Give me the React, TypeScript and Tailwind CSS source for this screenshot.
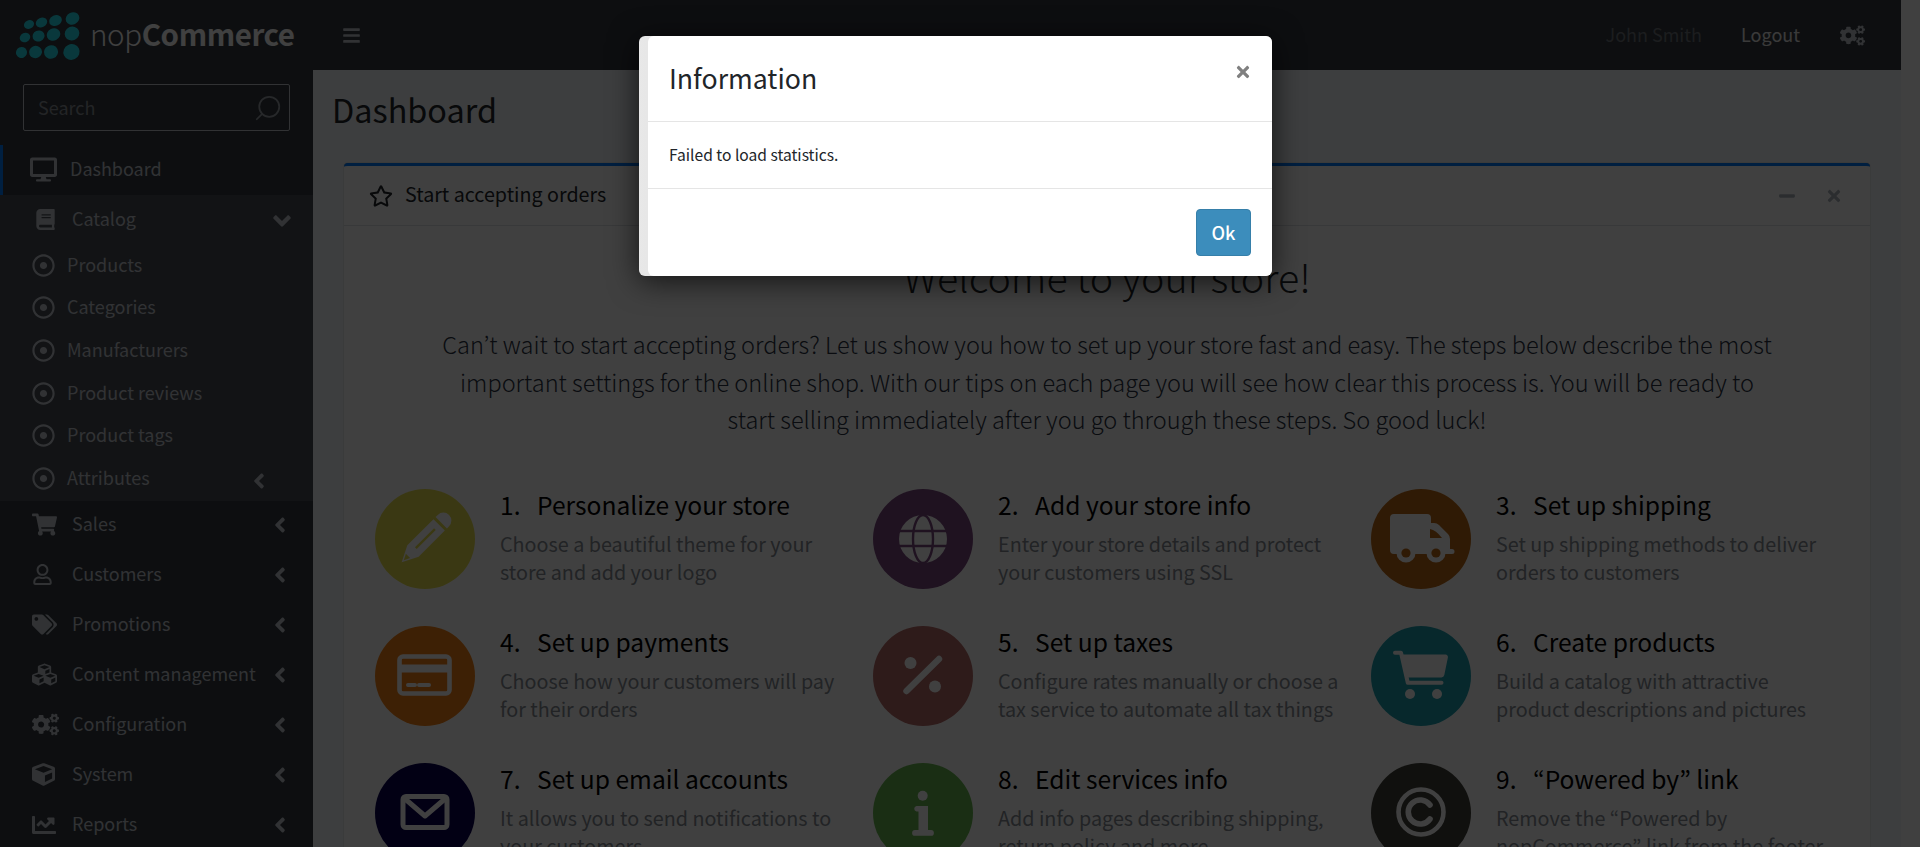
import React from 'react';
import { Search } from 'lucide-react';
import {
  FaAngleDown, FaAngleLeft, FaBars, FaBook, FaChartLine, FaCogs, FaCube, FaCubes, FaDesktop,
  FaMinus, FaRegDotCircle, FaRegStar, FaRegUser, FaShoppingCart, FaTags, FaTimes,
} from 'react-icons/fa';

const menuAfter = [
  { label: 'Sales', icon: <FaShoppingCart size={25} /> },
  { label: 'Customers', icon: <FaRegUser size={21} /> },
  { label: 'Promotions', icon: <FaTags size={25} /> },
  { label: 'Content management', icon: <FaCubes size={25} /> },
  { label: 'Configuration', icon: <FaCogs size={27} /> },
  { label: 'System', icon: <FaCube size={23} /> },
  { label: 'Reports', icon: <FaChartLine size={24} /> },
];

const subItems = ['Products', 'Categories', 'Manufacturers', 'Product reviews', 'Product tags', 'Attributes'];

function Logo() {
  const dots = [
    [29, 24.5, 5.2, 4.2], [41.5, 22.5, 5.9, 4.7], [55.5, 20.5, 6.5, 5.3], [72.5, 18.5, 7, 6],
    [25, 37.5, 5.4, 4.6], [38.5, 36, 6.1, 5.4], [53.5, 34.5, 6.9, 6.1], [72, 33.5, 7.4, 6.8],
    [21.5, 52.5, 5.6, 5.4], [35.5, 52, 6.5, 6.1], [51, 52, 7.1, 6.7], [71.5, 52, 8.2, 7.8],
  ];
  return (
    <svg width="85" height="70" viewBox="0 0 85 70">
      {dots.map(([cx, cy, rx, ry], i) => (
        <ellipse key={i} cx={cx} cy={cy} rx={rx} ry={ry} fill="#26e0f0" transform={`rotate(-25 ${cx} ${cy})`} />
      ))}
    </svg>
  );
}

function PencilIcon({ bg }: { bg: string }) {
  return (
    <g transform="translate(50 50) rotate(45)">
      <path d="M-8 -26 a8 8 0 0 1 16 0 v3 h-16 z M-8 -20 h16 v37 l-8 16 l-8 -16 z" fill="#fff" />
      <path d="M0 -14 v27" stroke={bg} strokeWidth="2.4" />
      <path d="M-3 24 h6 l-3 6 z" fill={bg} />
    </g>
  );
}

function GlobeIcon({ bg }: { bg: string }) {
  return (
    <g>
      <circle cx="50" cy="50" r="24" fill="#fff" />
      <ellipse cx="50" cy="50" rx="10" ry="24" fill="none" stroke={bg} strokeWidth="2.4" />
      <path d="M26 42 h48 M26 57 h48" stroke={bg} strokeWidth="2.4" />
    </g>
  );
}

function TruckIcon({ bg }: { bg: string }) {
  return (
    <g>
      <path d="M23 25 h33 a4 4 0 0 1 4 4 v5 h3 q3 0 5 2 l9 9 q2 2 2 5 v10 h2 a2.5 2.5 0 0 1 0 5 h-58 a4 4 0 0 1 -4 -4 v-32 a4 4 0 0 1 4 -4 z" fill="#fff" />
      <path d="M59 40 q6 1 12 9 h-12 z" fill={bg} />
      <circle cx="35" cy="64" r="9.5" fill="#fff" />
      <circle cx="65" cy="64" r="9.5" fill="#fff" />
      <circle cx="35" cy="64" r="4.6" fill={bg} />
      <circle cx="65" cy="64" r="4.6" fill={bg} />
    </g>
  );
}

function CardIcon() {
  return (
    <g fill="none" stroke="#fff">
      <rect x="24.5" y="30.5" width="50" height="37" rx="3.5" strokeWidth="4.6" />
      <path d="M24 42.5 h51" strokeWidth="8" />
      <path d="M33 59 h7 M44 59 h10" strokeWidth="4" strokeLinecap="round" />
    </g>
  );
}

function PercentIcon() {
  return (
    <g fill="#fff">
      <circle cx="37.5" cy="37" r="6" />
      <circle cx="62" cy="60.5" r="6" />
      <path d="M66 33 L33.5 65" stroke="#fff" strokeWidth="6.4" strokeLinecap="round" />
    </g>
  );
}

function CartIcon() {
  return (
    <g fill="#fff">
      <path d="M30 28.5 h44.5 a2.5 2.5 0 0 1 2.4 3 l-3.6 17.5 a3 3 0 0 1 -3 2.4 h-33.5 z" />
      <path d="M24 26.8 h6 l6.8 30 h33.7" fill="none" stroke="#fff" strokeWidth="4" strokeLinecap="round" strokeLinejoin="round" />
      <circle cx="39" cy="68" r="5" />
      <circle cx="66" cy="68" r="5" />
    </g>
  );
}

function MailIcon() {
  return (
    <g fill="none" stroke="#fff" strokeWidth="5">
      <rect x="28" y="33.5" width="44" height="31" rx="3" />
      <path d="M29 35 L50 53 L71 35" strokeLinejoin="round" />
    </g>
  );
}

function InfoIcon() {
  return (
    <g fill="#fff">
      <circle cx="49.7" cy="32.7" r="5" />
      <path d="M43.5 43 h11.5 v24 h3 a2.8 2.8 0 0 1 0 5.8 h-16 a2.8 2.8 0 0 1 0 -5.8 h3.5 v-18.5 h-2 a2.8 2.8 0 0 1 0 -5.5 z" />
    </g>
  );
}

function CopyrightIcon() {
  return (
    <g fill="none" stroke="#fff">
      <circle cx="50" cy="49" r="22.5" strokeWidth="4.6" />
      <path d="M59 42 a12 12 0 1 0 0 14" strokeWidth="5.6" strokeLinecap="round" />
    </g>
  );
}

const steps = [
  { n: '1.', title: 'Personalize your store', lines: ['Choose a beautiful theme for your', 'store and add your logo'], bg: '#e8e04c', Icon: PencilIcon },
  { n: '2.', title: 'Add your store info', lines: ['Enter your store details and protect', 'your customers using SSL'], bg: '#7c4880', Icon: GlobeIcon },
  { n: '3.', title: 'Set up shipping', lines: ['Set up shipping methods to deliver', 'orders to customers'], bg: '#bc6814', Icon: TruckIcon },
  { n: '4.', title: 'Set up payments', lines: ['Choose how your customers will pay', 'for their orders'], bg: '#f48014', Icon: CardIcon },
  { n: '5.', title: 'Set up taxes', lines: ['Configure rates manually or choose a', 'tax service to automate all tax things'], bg: '#b86c68', Icon: PercentIcon },
  { n: '6.', title: 'Create products', lines: ['Build a catalog with attractive', 'product descriptions and pictures'], bg: '#1ca0b0', Icon: CartIcon },
  { n: '7.', title: 'Set up email accounts', lines: ['It allows you to send notifications to', 'your customers'], bg: '#080050', Icon: MailIcon },
  { n: '8.', title: 'Edit services info', lines: ['Add info pages describing shipping,', 'return policy and more'], bg: '#68b850', Icon: InfoIcon },
  { n: '9.', title: '“Powered by” link', lines: ['Remove the “Powered by', 'nopCommerce” link from the footer'], bg: '#404038', Icon: CopyrightIcon },
];

export default function App() {
  return (
    <div className="relative h-[847px] overflow-hidden bg-white font-['Noto_Sans_CJK_KR',sans-serif] text-[18px] text-[#212529]">
      <div className="w-[1901px]">
        {/* top bar */}
        <header className="flex h-[70px] items-center bg-[#343a40]">
          <div className="flex w-[313px] items-center">
            <Logo />
            <span className="ml-[5px] pb-[2px] text-[29.5px] leading-none tracking-[-0.4px] text-white">
              <span className="font-light">nop</span><span className="font-bold">Commerce</span>
            </span>
          </div>
          <FaBars size={19} className="ml-[29px] text-[#c2c7d0]" />
          <div className="ml-auto flex items-center pr-[36px]">
            <span className="pb-[2px] text-[#6f757b]">John Smith</span>
            <span className="ml-[39px] pb-[2px] text-[#e8e8e8]">Logout</span>
            <FaCogs size={25} className="ml-[40px] text-[#c2c7d0]" />
          </div>
        </header>

        <div className="flex h-[777px]">
          {/* sidebar */}
          <aside className="w-[313px] shrink-0 bg-[#343a40] text-[#c2c7d0]">
            <div className="px-[23px] py-[14px]">
              <div className="flex h-[47px] w-[267px] items-center justify-between rounded-[2px] border border-[#c2c7d0] pl-[14px] pr-[6px] text-[#8a9097]">
                <span>Search</span>
                <Search size={30} strokeWidth={1.4} className="-scale-x-100 text-[#9aa0a8]" />
              </div>
            </div>
            <div className="flex h-[50px] items-center border-l-[3px] border-[#007bff] pb-[2px] pl-[27px]">
              <FaDesktop size={27} className="shrink-0" />
              <span className="ml-[13px] pb-[2px]">Dashboard</span>
            </div>
            <div className="bg-[#484d54]">
              <div className="flex h-[50px] items-center pb-[2px] pl-[35px] pr-[17px]">
                <FaBook size={21} className="shrink-0" />
                <span className="ml-[16px] pb-[2px]">Catalog</span>
                <FaAngleDown size={28} className="ml-auto mt-[4px]" />
              </div>
              {subItems.map((s) => (
                <div key={s} className="flex h-[42.6px] items-center pb-[2px] pl-[32px] pr-[42px]">
                  <FaRegDotCircle size={23} className="shrink-0" />
                  <span className="ml-[12px] pb-[2px]">{s}</span>
                  {s === 'Attributes' && <FaAngleLeft size={24} className="ml-auto mt-[5px]" />}
                </div>
              ))}
            </div>
            {menuAfter.map((m) => (
              <div key={m.label} className="flex h-[50px] items-center pb-[2px] pr-[21px]">
                <div className="flex w-[72px] shrink-0 items-center pl-[32px]">{m.icon}</div>
                <span className="whitespace-nowrap pb-[2px]">{m.label}</span>
                <FaAngleLeft size={24} className="ml-auto shrink-0" />
              </div>
            ))}
          </aside>

          {/* content */}
          <main className="flex-1 bg-[#f4f6f9] pl-[19px] pt-[17px]">
            <h1 className="text-[32.4px] font-normal leading-[43px]">Dashboard</h1>
            <section className="ml-[12px] mr-[31px] mt-[33px] h-[800px] rounded-[4px] border-t-[3px] border-[#007bff] bg-white shadow-[0_0_1px_rgba(0,0,0,0.5)]">
              <div className="flex h-[60px] items-center border-b border-[#dee2e6] pl-[25px] pr-[27px]">
                <FaRegStar size={24} className="text-[#212529]" />
                <span className="ml-[12px] pb-[3px] text-[19.7px] text-[#212529]">Start accepting orders</span>
                <FaMinus size={18} className="ml-auto text-[#adb5bd]" />
                <FaTimes size={18} className="ml-[29px] text-[#adb5bd]" />
              </div>
              <h2 className="mt-[23px] text-center text-[39.4px] font-light leading-[54px] text-[#212529]">Welcome to your store!</h2>
              <p className="mt-[23px] text-center text-[23.55px] font-light leading-[37.5px] text-[#2a3342]">
                Can’t wait to start accepting orders? Let us show you how to set up your store fast and easy. The steps below describe the most<br />
                important settings for the online shop. With our tips on each page you will see how clear this process is. You will be ready to<br />
                start selling immediately after you go through these steps. So good luck!
              </p>
              <div className="ml-[31px] mt-[50.5px] grid grid-cols-[498px_498px_498px] gap-y-[37px]">
                {steps.map(({ n, title, lines, bg, Icon }) => (
                  <div key={n} className="flex h-[100px]">
                    <svg width="100" height="100" viewBox="0 0 100 100" className="shrink-0">
                      <circle cx="50" cy="50" r="50" fill={bg} />
                      <Icon bg={bg} />
                    </svg>
                    <div className="ml-[25px] -mt-[1px]">
                      <div className="flex h-[32px] items-center text-[24.6px] text-black">
                        <span className="w-[37px]">{n}</span>
                        <span>{title}</span>
                      </div>
                      <div className="mt-[10px] text-[19.75px] leading-[28px] text-[#868c94]">
                        {lines.map((l) => <div key={l} className="whitespace-nowrap">{l}</div>)}
                      </div>
                    </div>
                  </div>
                ))}
              </div>
            </section>
          </main>
        </div>
      </div>

      {/* backdrop and dialog */}
      <div className="absolute inset-0 bg-black/75" />
      <div className="absolute left-[639px] top-[36px] h-[240px] w-[633px] rounded-[6px] bg-gradient-to-r from-[#e8e8e8] to-[#9a9a9a] shadow-[0_5px_30px_rgba(0,0,0,0.7)]">
        <div className="ml-[9px] h-full rounded-[6px] bg-white">
          <div className="relative flex h-[86px] items-center border-b border-[#e5e5e5] pl-[21px]">
            <span className="text-[26.7px] text-[#212529]">Information</span>
            <FaTimes size={18} className="absolute right-[20px] top-[27px] text-[#808080]" />
          </div>
          <div className="flex h-[67px] items-center border-b border-[#e5e5e5] pl-[21px] text-[15.6px] text-[#212529]">
            Failed to load statistics.
          </div>
          <div className="flex justify-end pr-[21px] pt-[20px]">
            <button className="h-[47px] w-[55px] rounded-[4px] border border-[#367fa9] bg-[#3c8dbc] text-[18px] font-medium text-white">Ok</button>
          </div>
        </div>
      </div>
    </div>
  );
}
